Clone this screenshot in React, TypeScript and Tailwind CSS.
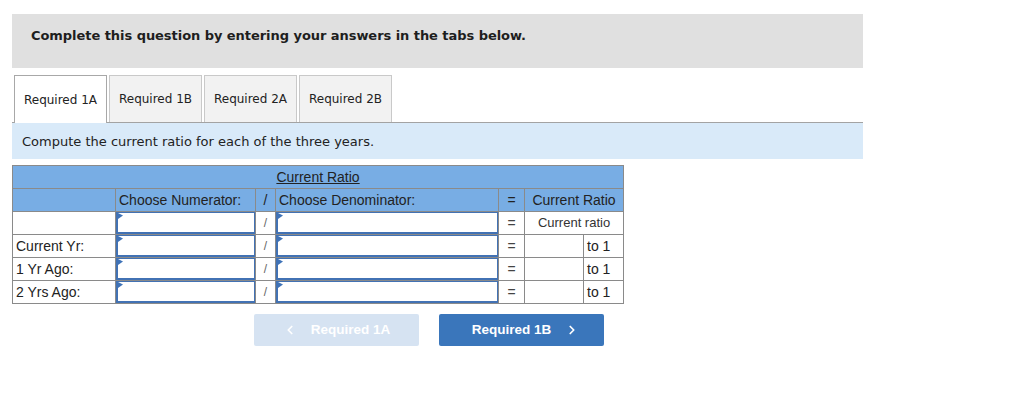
import { ChevronLeft, ChevronRight } from "lucide-react";

const tabs = ["Required 1A", "Required 1B", "Required 2A", "Required 2B"];

const rows = ["Current Yr:", "1 Yr Ago:", "2 Yrs Ago:"];

const Pick = () => (
  <div className="relative h-[22px] w-full border border-l-2 border-b-2 border-[#4272b4] bg-white">
    <svg className="absolute left-0 top-0" width="5" height="7" viewBox="0 0 5 7">
      <polygon points="0,0 5,2.5 0,6" fill="#3f73b8" />
    </svg>
  </div>
);

const cell = "border border-[#8a8a8a] p-0 h-[23px]";

const App = () => {
  return (
    <div className="min-h-[418px] bg-white pl-3 pt-[14px]" style={{ fontFamily: '"DejaVu Sans", Verdana, sans-serif' }}>
      <div className="w-[851px] h-[54px] bg-[#e0e0e0] pl-[19px] pt-[14px]">
        <p className="text-[13px] leading-[16px] font-bold text-[#1e1e1e] tracking-[-0.05px]">
          Complete this question by entering your answers in the tabs below.
        </p>
      </div>

      <div className="mt-[7px] w-[851px] flex gap-[2px] pl-[2px] border-b border-[#a3a3a3]">
        {tabs.map((t, i) => (
          <div
            key={t}
            className={
              i === 0
                ? "w-[93px] h-[48px] -mb-px flex items-center justify-center bg-white border border-b-0 border-[#a8a8a8] text-[12px] text-[#222]"
                : "w-[93px] h-[47px] flex items-center justify-center bg-[#f2f2f2] border border-b-0 border-[#c9c9c9] text-[12px] text-[#222]"
            }
          >
            {t}
          </div>
        ))}
      </div>

      <div className="w-[851px] h-[36px] bg-[#d9eaf9] flex items-center pl-[10px] pt-px text-[13px] text-[#222]">
        Compute the current ratio for each of the three years.
      </div>

      <table
        className="mt-[6px] table-fixed border-collapse w-[611px] text-[14px] text-[#222]"
        style={{ fontFamily: '"Liberation Sans", Arial, sans-serif' }}
      >
        <colgroup>
          <col className="w-[103px]" />
          <col className="w-[140px]" />
          <col className="w-[20px]" />
          <col className="w-[223px]" />
          <col className="w-[26px]" />
          <col className="w-[59px]" />
          <col className="w-[40px]" />
        </colgroup>
        <thead>
          <tr className="bg-[#78ade4]">
            <th colSpan={7} className={cell + " font-normal underline text-center"}>
              Current Ratio
            </th>
          </tr>
          <tr className="bg-[#78ade4]">
            <th className={cell}></th>
            <th className={cell + " font-normal text-left pl-[3px]"}>Choose Numerator:</th>
            <th className={cell + " font-normal text-center"}>/</th>
            <th className={cell + " font-normal text-left pl-[3px]"}>Choose Denominator:</th>
            <th className={cell + " font-normal text-center"}>=</th>
            <th colSpan={2} className={cell + " font-normal text-center"}>Current Ratio</th>
          </tr>
        </thead>
        <tbody>
          <tr>
            <td className={cell}></td>
            <td className={cell}><Pick /></td>
            <td className={cell + " text-center text-[#666] text-[12px]"}>/</td>
            <td className={cell}><Pick /></td>
            <td className={cell + " text-center text-[#444]"}>=</td>
            <td colSpan={2} className={cell + " text-center text-[13px] text-[#333]"}>Current ratio</td>
          </tr>
          {rows.map(r => (
            <tr key={r}>
              <td className={cell + " pl-[3px]"}>{r}</td>
              <td className={cell}><Pick /></td>
              <td className={cell + " text-center text-[#666] text-[12px]"}>/</td>
              <td className={cell}><Pick /></td>
              <td className={cell + " text-center text-[#444]"}>=</td>
              <td className={cell}></td>
              <td className={cell + " pl-[3px]"}>to 1</td>
            </tr>
          ))}
        </tbody>
      </table>

      <div
        className="mt-[10px] ml-[242px] flex gap-5 text-[13.5px] font-bold text-white"
        style={{ fontFamily: '"Liberation Sans", Arial, sans-serif' }}
      >
        <button className="w-[165px] h-[32px] rounded-[2px] bg-[#d6e3f2] flex items-center justify-center gap-[14px]">
          <ChevronLeft size={14} strokeWidth={3} />
          <span>Required 1A</span>
        </button>
        <button className="w-[165px] h-[32px] rounded-[2px] bg-[#3a76bb] flex items-center justify-center gap-[14px] pl-2">
          <span>Required 1B</span>
          <ChevronRight size={14} strokeWidth={3} />
        </button>
      </div>
    </div>
  );
};

export default App;
